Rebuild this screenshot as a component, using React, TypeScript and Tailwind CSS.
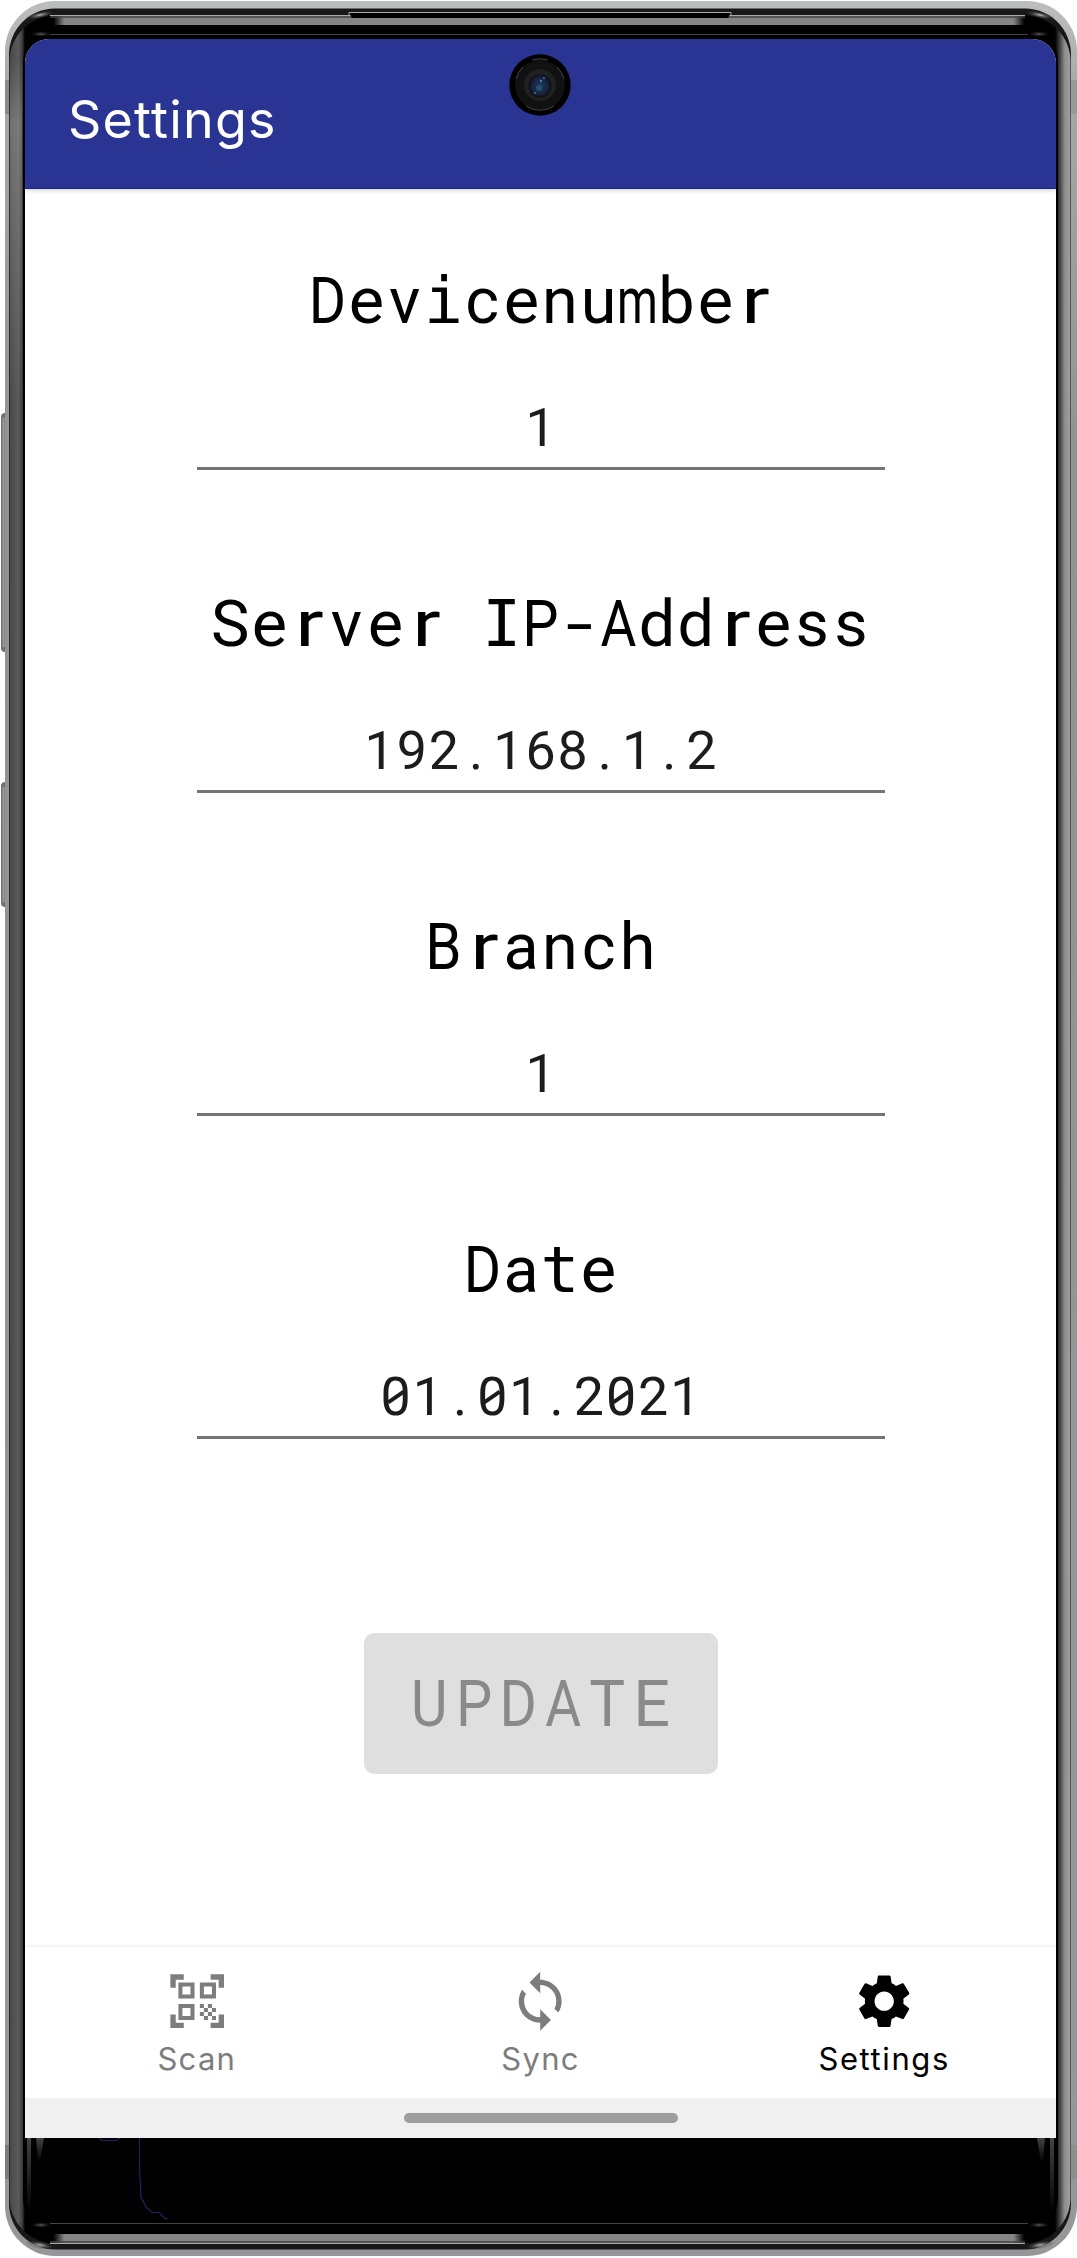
import { MdQrCodeScanner, MdSettings, MdSync } from "react-icons/md";

// Per-glyph adjustments that fit proportional letters into equal-width cells.
const glyphs: Record<string, string> = {
  D: "scale-x-[0.88]",
  P: "scale-x-[0.89]",
  B: "scale-x-[0.9]",
  A: "scale-x-[0.85]",
  U: "scale-x-[0.87]",
  T: "scale-x-[0.93]",
  m: "scale-x-[0.72]",
  e: "scale-x-[1.03]",
  r: "scale-x-[1.3] translate-x-[2px]",
  "-": "scale-x-[1.5]",
  i: "font-['DejaVu_Sans_Mono']",
  I: "font-['DejaVu_Sans_Mono']",
  t: "font-['DejaVu_Sans_Mono']",
  "0": "before:absolute before:left-1/2 before:top-1/2 before:h-[4px] before:w-[19px] before:-translate-x-1/2 before:-translate-y-1/2 before:-rotate-[35deg] before:bg-current before:content-['']",
};

function Mono({ text, cell }: { text: string; cell: string }) {
  return (
    <>
      {text.split("").map((c, i) => (
        <span key={i} className={`relative inline-block whitespace-pre text-center ${cell}`}>
          <span className={`relative inline-flex w-full justify-center ${glyphs[c] ?? ""}`}>{c}</span>
        </span>
      ))}
    </>
  );
}

function Field({ label, value }: { label: string; value: string }) {
  return (
    <div className="flex h-[323px] w-[688px] flex-col text-center">
      <div className="h-[76px] whitespace-nowrap text-[64.7px] leading-[76px] text-black">
        <Mono text={label} cell="w-[38.8px]" />
      </div>
      <div className="mt-[57px] h-[74px] whitespace-nowrap border-b-[3px] border-[#747474] text-[53.7px] leading-[64px] text-[#1c1c1c]">
        <Mono text={value} cell="w-[32.2px]" />
      </div>
    </div>
  );
}

function Frame() {
  return (
    <svg className="absolute inset-0" width="1077" height="2258" viewBox="0 0 1077 2258">
      <defs>
        <linearGradient id="shell" x1="0" y1="0" x2="0" y2="1">
          <stop offset="0" stopColor="#bcbebd" />
          <stop offset="0.04" stopColor="#a8a8a8" />
          <stop offset="0.2" stopColor="#929292" />
          <stop offset="1" stopColor="#97979a" />
        </linearGradient>
        <linearGradient id="bezel" gradientUnits="userSpaceOnUse" x1="9" y1="0" x2="1071" y2="0">
          <stop offset="0" stopColor="#454545" />
          <stop offset="0.003" stopColor="#4e4e4e" />
          <stop offset="0.009" stopColor="#5a5a5a" />
          <stop offset="0.0125" stopColor="#3c3c3c" />
          <stop offset="0.015" stopColor="#000" />
          <stop offset="0.042" stopColor="#000" />
          <stop offset="0.052" stopColor="#858585" />
          <stop offset="0.946" stopColor="#858585" />
          <stop offset="0.956" stopColor="#000" />
          <stop offset="0.985" stopColor="#000" />
          <stop offset="0.989" stopColor="#3a3a3a" />
          <stop offset="0.994" stopColor="#8c8c8c" />
          <stop offset="1" stopColor="#a2a2a2" />
        </linearGradient>
        <linearGradient id="sheen" x1="0" y1="0" x2="0" y2="1">
          <stop offset="0" stopColor="#aaa" stopOpacity="0" />
          <stop offset="0.03" stopColor="#aaa" stopOpacity="0.4" />
          <stop offset="0.16" stopColor="#aaa" stopOpacity="0" />
        </linearGradient>
        <linearGradient id="glint" x1="0" y1="0" x2="0" y2="1">
          <stop offset="0" stopColor="#444" />
          <stop offset="1" stopColor="#000" />
        </linearGradient>
        <radialGradient id="corner">
          <stop offset="0" stopColor="#bbb" />
          <stop offset="1" stopColor="#222" stopOpacity="0" />
        </radialGradient>
      </defs>
      <rect x="1" y="413" width="8" height="239" rx="4" fill="#707271" />
      <rect x="2.5" y="418" width="2" height="229" fill="#9a9c9b" />
      <rect x="1" y="782" width="8" height="125" rx="4" fill="#707271" />
      <rect x="2.5" y="787" width="2" height="115" fill="#9a9c9b" />
      <rect x="5" y="1" width="1072" height="2255" rx="50" fill="url(#shell)" />
      <rect x="5" y="80" width="4" height="34" fill="#8a8a8a" />
      <rect x="1071" y="80" width="6" height="34" fill="#999" />
      <rect x="5" y="2145" width="4" height="34" fill="#7c7c7c" />
      <rect x="1071" y="2145" width="6" height="34" fill="#8e8e8e" />
      <rect x="9" y="8.5" width="1062" height="2241" rx="46" fill="#181818" />
      <rect x="9.5" y="15.5" width="1061" height="2228" rx="46" fill="url(#bezel)" />
      <path d="M50 15.5H1025M50 2243.5H1025" stroke="#aaa" strokeWidth="1" />
      <path d="M50 17H1025M50 2242H1025" stroke="#444" strokeWidth="1.5" />
      <rect x="10" y="60" width="12" height="2130" fill="url(#sheen)" />
      <path d="M1070.5 60V2200" stroke="#555" strokeWidth="1" />
      <rect x="23" y="25" width="1035" height="2209" rx="36" fill="#000" />
      <path d="M50 34.5H1028M50 2223.5H1028" stroke="#444" strokeWidth="1" />
      <ellipse cx="40" cy="15" rx="15" ry="3.5" fill="url(#corner)" transform="rotate(-12 40 15)" />
      <ellipse cx="1040" cy="15" rx="15" ry="3.5" fill="url(#corner)" transform="rotate(12 1040 15)" />
      <ellipse cx="40" cy="2245" rx="15" ry="4" fill="url(#corner)" transform="rotate(10 40 2245)" />
      <ellipse cx="1040" cy="2245" rx="15" ry="4" fill="url(#corner)" transform="rotate(-10 1040 2245)" />
      <ellipse cx="41" cy="34" rx="11" ry="3" fill="url(#corner)" opacity="0.5" />
      <ellipse cx="1039" cy="34" rx="11" ry="3" fill="url(#corner)" opacity="0.5" />
      <ellipse cx="41" cy="2225" rx="11" ry="3" fill="url(#corner)" opacity="0.5" />
      <ellipse cx="1039" cy="2225" rx="11" ry="3" fill="url(#corner)" opacity="0.5" />
      <path d="M349 12.5H731L728 18H352Z" fill="#000" />
      <path d="M340 15.5H349V12.5H731V15.5H740" fill="none" stroke="#aaa" strokeWidth="1" />
      <rect x="27" y="2138" width="4" height="74" fill="url(#glint)" />
      <path d="M36 2138H44L40 2162H38Z" fill="url(#glint)" />
      <rect x="1050" y="2138" width="4" height="74" fill="url(#glint)" />
      <path d="M1037 2138H1045L1043 2162H1041Z" fill="url(#glint)" />
      <path
        d="M99 2138L102 2140.5H116L120 2138M139.5 2138V2166L141 2197L146 2207L152 2212.5H159L165 2218.5H168"
        fill="none"
        stroke="#301a68"
        strokeWidth="1.2"
      />
    </svg>
  );
}

function Camera() {
  return (
    <svg className="absolute left-[509px] top-[54px]" width="62" height="62" viewBox="-31 -31 62 62">
      <defs>
        <radialGradient id="lens">
          <stop offset="0" stopColor="#1c3a5c" />
          <stop offset="0.7" stopColor="#18233f" />
          <stop offset="1" stopColor="#0b0d16" />
        </radialGradient>
      </defs>
      <circle r="30.7" fill="#000" />
      <circle r="25" fill="#111" />
      <path d="M-24 -6A25 25 0 0 1 -17 -18M24 -6A25 25 0 0 0 17 -18M-14 21A25 25 0 0 0 14 21M-8 -25A27 27 0 0 1 8 -25" fill="none" stroke="#444" strokeWidth="1" />
      <circle r="16" fill="#202020" />
      <circle cy="1" r="11.5" fill="url(#lens)" />
      <circle cx="-1" cy="3" r="3" fill="#23506c" />
      <circle cx="1" cy="-4" r="1.2" fill="#4a7da3" />
      <circle cx="4" cy="-7" r="1" fill="#3c6d96" />
      <circle cx="-5" cy="8" r="1.3" fill="#2b6282" />
    </svg>
  );
}

const tabs = [
  { label: "Scan", Icon: MdQrCodeScanner, color: "text-[#7d7d7d]", spacing: "tracking-[1.3px]" },
  { label: "Sync", Icon: MdSync, color: "text-[#7d7d7d]", spacing: "tracking-[1.3px]" },
  { label: "Settings", Icon: MdSettings, color: "text-black", spacing: "tracking-[1.6px]" },
];

export default function App() {
  return (
    <div className="relative h-[2258px] w-[1077px] overflow-hidden bg-white pl-[25px] pt-[39px] font-['Roboto',sans-serif]">
      <Frame />
      <div className="relative flex h-[2099px] w-[1031px] flex-col overflow-hidden rounded-t-[24px] bg-white">
        <header className="flex h-[150px] shrink-0 items-start border-b border-[#1a237e] bg-[#293493] pl-[43px] pt-[49px] shadow-[0_1px_5px_rgba(0,0,0,0.2)]">
          <h1 className="font-['Inter',sans-serif] text-[52px] leading-[64px] tracking-[1.2px] text-white">Settings</h1>
        </header>
        <main className="flex flex-1 flex-col items-center pt-[74px]">
          <Field label="Devicenumber" value="1" />
          <Field label="Server IP-Address" value="192.168.1.2" />
          <Field label="Branch" value="1" />
          <Field label="Date" value="01.01.2021" />
          <button className="mt-[78px] h-[141px] w-[354px] whitespace-nowrap rounded-[10px] bg-[#dfdfdf] text-[64.7px] leading-[76px] text-[#8a8a8a]">
            <Mono text="UPDATE" cell="w-[44.5px]" />
          </button>
        </main>
        <nav className="grid h-[151px] shrink-0 grid-cols-3 bg-white shadow-[0_-1px_4px_rgba(0,0,0,0.08)]">
          {tabs.map(({ label, Icon, color, spacing }) => (
            <div key={label} className={`flex flex-col items-center pt-[22px] ${color}`}>
              <Icon size={64.4} />
              <span className={`mt-[6px] font-['Inter',sans-serif] text-[31px] leading-[40px] ${spacing}`}>{label}</span>
            </div>
          ))}
        </nav>
        <div className="flex h-[40px] shrink-0 items-center justify-center bg-[#f0f0f0]">
          <div className="h-[10px] w-[274px] rounded-full bg-[#9e9e9e]" />
        </div>
      </div>
      <Camera />
    </div>
  );
}
